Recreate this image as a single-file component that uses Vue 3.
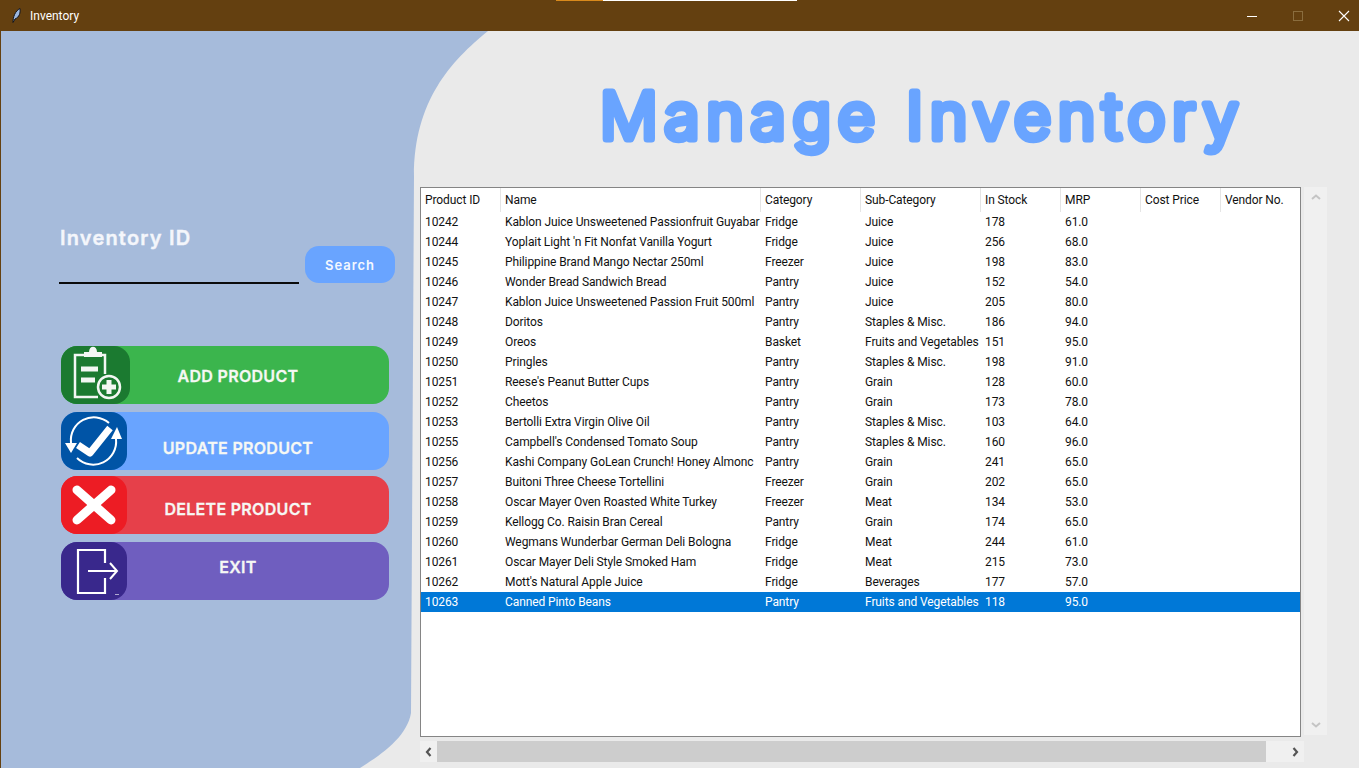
<template>
  <div class="window">
    <header class="titlebar">
      <div class="title-left">
        <svg class="feather" width="9" height="15" viewBox="0 0 9 15">
          <path d="M1 14.500C1 9 3 3 8 0.500C8.500 5 7.500 9 3 11Z" fill="#9db8e0" stroke="#10131c" stroke-width="1" />
        </svg>
        <span>Inventory</span>
      </div>
      <div class="strip"><i class="strip-orange"></i><i class="strip-white"></i></div>
      <div class="win-buttons">
        <svg width="12" height="12" viewBox="0 0 12 12"><path d="M1 6.500H11" stroke="#fff" stroke-width="1" /></svg>
        <svg width="12" height="12" viewBox="0 0 12 12"><rect x="1.500" y="1.500" width="9" height="9" fill="none" stroke="#8a6d3e" /></svg>
        <svg width="12" height="12" viewBox="0 0 12 12"><path d="M1 1L11 11M11 1L1 11" stroke="#fff" stroke-width="1.100" /></svg>
      </div>
    </header>

    <main class="content">
      <svg class="shape" width="500" height="737" viewBox="0 0 500 737">
        <path d="M0 0H487C450 30 413 70 413 145L410 682C406 705 383 722 359 737H0Z" fill="#a6bbdb" />
      </svg>

      <aside class="side">
        <div class="search">
          <div class="search-field">
            <label>Inventory ID</label>
            <div class="search-line"></div>
          </div>
          <button class="search-btn">Search</button>
        </div>

        <div class="actions">
          <div v-for="a in actions" :key="a.label" class="action" :class="a.cls">
            <span class="action-icon">
              <svg v-if="a.cls === 'add'" width="69" height="58" viewBox="0 0 69 58" fill="none" stroke="#f3f7f3">
                <path d="M26 9H14V51H37" stroke-width="2.500" />
                <path d="M38 9H44V28" stroke-width="2.500" />
                <path d="M23 11V6H28C28 -1 36 -1 36 6H41V11Z" fill="#f3f7f3" stroke="none" />
                <path d="M20 23H37M20 34H34" stroke-width="5" />
                <circle cx="48" cy="41" r="11" fill="#1b7a30" stroke-width="2.500" />
                <path d="M48 34V48M41 41H55" stroke-width="5" />
              </svg>
              <svg v-else-if="a.cls === 'update'" width="66" height="58" viewBox="0 0 66 58" fill="none" stroke="#fff">
                <path d="M10 31A23 23 0 0 1 48 11" stroke-width="2" />
                <path d="M55 27A23 23 0 0 1 16 46" stroke-width="2" />
                <path d="M4 31H16L10 41Z" fill="#fff" stroke="none" />
                <path d="M50 27H61L56 15Z" fill="#fff" stroke="none" />
                <path d="M17 33L29 41L49 16" stroke-width="7" stroke-linejoin="round" />
              </svg>
              <svg v-else-if="a.cls === 'delete'" width="66" height="58" viewBox="0 0 66 58" fill="none" stroke="#fff">
                <path d="M16 14L50 44M50 14L16 44" stroke-width="9" stroke-linecap="round" />
              </svg>
              <svg v-else width="66" height="58" viewBox="0 0 66 58" fill="none" stroke="#fff">
                <path d="M44 21V8H17V51H44V36" stroke-width="2.200" />
                <path d="M27 29H55M49 21L56 29L49 37" stroke-width="2" />
                <path d="M54 52.500H58" stroke-width="1" stroke-opacity="0.6" />
              </svg>
            </span>
            <span class="action-label" :class="a.cls + '-label'">{{ a.label }}</span>
          </div>
        </div>
      </aside>

      <section class="main">
        <svg class="heading" width="939" height="156" viewBox="0 0 939 156">
          <text x="181" y="108">Manage Inventory</text>
        </svg>

        <div class="tree-wrap">
          <div class="tree-top">
            <div class="tree">
              <div class="tree-head">
                <div v-for="c in columns" :key="c" class="cell head-cell">{{ c }}</div>
              </div>
              <div
                v-for="r in rows"
                :key="r[0]"
                class="tree-row"
                :class="{ selected: r[0] === '10263' }"
              >
                <div v-for="(v, i) in r" :key="i" class="cell">{{ v }}</div>
              </div>
            </div>
            <div class="vscroll">
              <svg width="10" height="6" viewBox="0 0 10 6"><path d="M1 5L5 1.500L9 5" fill="none" stroke="#c4c4c4" stroke-width="2" /></svg>
              <svg width="10" height="6" viewBox="0 0 10 6"><path d="M1 1L5 4.500L9 1" fill="none" stroke="#c4c4c4" stroke-width="2" /></svg>
            </div>
          </div>
          <div class="hscroll">
            <span class="arrow">
              <svg width="7" height="10" viewBox="0 0 7 10"><path d="M5.500 1L2 5L5.500 9" fill="none" stroke="#555" stroke-width="2.200" /></svg>
            </span>
            <div class="thumb"></div>
            <span class="arrow end">
              <svg width="7" height="10" viewBox="0 0 7 10"><path d="M1.500 1L5 5L1.500 9" fill="none" stroke="#555" stroke-width="2.200" /></svg>
            </span>
          </div>
        </div>
      </section>
    </main>
  </div>
</template>

<script setup>
const actions = [
  { label: 'ADD PRODUCT', cls: 'add' },
  { label: 'UPDATE PRODUCT', cls: 'update' },
  { label: 'DELETE PRODUCT', cls: 'delete' },
  { label: 'EXIT', cls: 'exit' }
]

const columns = ['Product ID', 'Name', 'Category', 'Sub-Category', 'In Stock', 'MRP', 'Cost Price', 'Vendor No.']

const rows = [
  ['10242', 'Kablon Juice Unsweetened Passionfruit Guyabar', 'Fridge', 'Juice', '178', '61.0'],
  ['10244', "Yoplait Light 'n Fit Nonfat Vanilla Yogurt", 'Fridge', 'Juice', '256', '68.0'],
  ['10245', 'Philippine Brand Mango Nectar 250ml', 'Freezer', 'Juice', '198', '83.0'],
  ['10246', 'Wonder Bread Sandwich Bread', 'Pantry', 'Juice', '152', '54.0'],
  ['10247', 'Kablon Juice Unsweetened Passion Fruit 500ml', 'Pantry', 'Juice', '205', '80.0'],
  ['10248', 'Doritos', 'Pantry', 'Staples & Misc.', '186', '94.0'],
  ['10249', 'Oreos', 'Basket', 'Fruits and Vegetables', '151', '95.0'],
  ['10250', 'Pringles', 'Pantry', 'Staples & Misc.', '198', '91.0'],
  ['10251', "Reese's Peanut Butter Cups", 'Pantry', 'Grain', '128', '60.0'],
  ['10252', 'Cheetos', 'Pantry', 'Grain', '173', '78.0'],
  ['10253', 'Bertolli Extra Virgin Olive Oil', 'Pantry', 'Staples & Misc.', '103', '64.0'],
  ['10255', "Campbell's Condensed Tomato Soup", 'Pantry', 'Staples & Misc.', '160', '96.0'],
  ['10256', 'Kashi Company GoLean Crunch! Honey Almonc', 'Pantry', 'Grain', '241', '65.0'],
  ['10257', 'Buitoni Three Cheese Tortellini', 'Freezer', 'Grain', '202', '65.0'],
  ['10258', 'Oscar Mayer Oven Roasted White Turkey', 'Freezer', 'Meat', '134', '53.0'],
  ['10259', 'Kellogg Co. Raisin Bran Cereal', 'Pantry', 'Grain', '174', '65.0'],
  ['10260', 'Wegmans Wunderbar German Deli Bologna', 'Fridge', 'Meat', '244', '61.0'],
  ['10261', 'Oscar Mayer Deli Style Smoked Ham', 'Fridge', 'Meat', '215', '73.0'],
  ['10262', "Mott's Natural Apple Juice", 'Fridge', 'Beverages', '177', '57.0'],
  ['10263', 'Canned Pinto Beans', 'Pantry', 'Fruits and Vegetables', '118', '95.0']
].map(r => [...r, '', ''])
</script>

<style scoped>
.window {
  width: 1359px;
  height: 768px;
  overflow: hidden;
  display: flex;
  flex-direction: column;
  background: #eaeaea;
  font-family: Roboto, "Liberation Sans", sans-serif;
}

.titlebar {
  height: 31px;
  flex: none;
  position: relative;
  display: flex;
  align-items: center;
  justify-content: space-between;
  background: #644010;
  color: #fff;
  font-size: 12px;
}

.title-left {
  display: flex;
  align-items: center;
  gap: 9px;
  padding-left: 12px;
}

.strip {
  position: absolute;
  left: 556px;
  top: 0;
  display: flex;
  height: 1px;
}

.strip-orange {
  width: 47px;
  background: #d98a1c;
}

.strip-white {
  width: 194px;
  background: #fff;
}

.win-buttons {
  display: flex;
  gap: 34px;
  padding-right: 9px;
}

.content {
  flex: 1;
  position: relative;
  display: flex;
  border-left: 1px solid #644010;
}

.shape {
  position: absolute;
  left: 0;
  top: 0;
}

.side {
  position: relative;
  width: 419px;
  flex: none;
  padding: 196px 0 0 59px;
  box-sizing: border-box;
}

.search {
  display: flex;
  align-items: flex-end;
  gap: 6px;
}

.search-field {
  width: 240px;
  margin-left: -1px;
}

.search-field label {
  display: block;
  color: #f4f6fb;
  font: 600 20px/23px "Inter", sans-serif;
  letter-spacing: 1.2px;
  padding-left: 1px;
  -webkit-text-stroke: 0.4px #f4f6fb;
}

.search-line {
  height: 2px;
  margin-top: 32px;
  background: #0b0b0b;
}

.search-btn {
  width: 90px;
  height: 37px;
  margin-bottom: 1px;
  padding: 0;
  border: none;
  border-radius: 14px;
  background: #69a4ff;
  color: #f4f8ff;
  font: 600 13px "Inter", sans-serif;
  letter-spacing: 1px;
}

.actions {
  display: flex;
  flex-direction: column;
  margin: 62px 0 0 1px;
  width: 328px;
}

.action {
  height: 58px;
  border-radius: 16px;
  display: flex;
  color: #f6f8f4;
  font: 600 16px "Inter", sans-serif;
  letter-spacing: 0.3px;
  -webkit-text-stroke: 0.3px #f6f8f4;
}

.action + .action {
  margin-top: 6px;
}

.action.update {
  margin-top: 8px;
}

.action.exit {
  margin-top: 8px;
}

.action-icon {
  width: 66px;
  flex: none;
  border-radius: 16px;
  display: flex;
  align-items: center;
  justify-content: center;
}

.action-label {
  flex: 1;
  display: flex;
  align-items: center;
  justify-content: center;
  margin-left: 33px;
  margin-right: 73px;
  white-space: nowrap;
}

.update-label {
  padding-top: 14px;
}

.delete-label {
  padding-top: 8px;
}

.exit-label {
  padding-bottom: 9px;
}

.add {
  background: #3bb54d;
}

.add .action-icon {
  width: 69px;
  background: #1b7a30;
}

.add .action-label {
  margin-left: 30px;
  padding-top: 1px;
}

.update {
  background: #69a4ff;
}

.update .action-icon {
  background: #0054a6;
}

.delete {
  background: #e6404a;
}

.delete .action-icon {
  background: #ed1c24;
}

.exit {
  background: #6f5ebf;
}

.exit .action-icon {
  background: #39288c;
}

.main {
  position: relative;
  flex: 1;
  min-width: 0;
}

.heading {
  display: block;
  margin-left: -1px;
}

.heading text {
  fill: #69a4ff;
  stroke: #69a4ff;
  stroke-width: 7px;
  stroke-linejoin: round;
  stroke-linecap: round;
  font: 300 64px "Inter", sans-serif;
  letter-spacing: 6.7px;
}

.tree-wrap {
  width: 907px;
}

.tree-top {
  display: flex;
  gap: 3px;
}

.tree {
  width: 881px;
  height: 550px;
  box-sizing: border-box;
  border: 1px solid #858585;
  background: #fff;
  font-size: 12px;
  letter-spacing: -0.1px;
  color: #111;
  overflow: hidden;
}

.tree-head {
  display: grid;
  grid-template-columns: 80px 260px 100px 120px 80px 80px 80px 80px;
  height: 24px;
}

.head-cell {
  height: 24px;
  box-sizing: border-box;
  border-right: 1px solid #e5e5e5;
}

.head-cell:last-child {
  border-right: none;
}

.tree-row {
  display: grid;
  grid-template-columns: 80px 260px 100px 120px 80px 80px 80px 80px;
  height: 20px;
}

.cell {
  padding-left: 4px;
  line-height: 20px;
  white-space: nowrap;
  overflow: hidden;
}

.head-cell.cell {
  line-height: 24px;
}

.tree-row.selected {
  background: #0078d7;
  color: #fff;
}

.vscroll {
  width: 23px;
  height: 548px;
  background: #f0f0f0;
  display: flex;
  flex-direction: column;
  align-items: center;
  justify-content: space-between;
  padding: 7px 0;
  box-sizing: border-box;
}

.hscroll {
  display: flex;
  width: 884px;
  height: 21px;
  margin-top: 4px;
  background: #f0f0f0;
}

.arrow {
  width: 17px;
  flex: none;
  display: flex;
  align-items: center;
  justify-content: center;
}

.arrow.end {
  width: 38px;
  justify-content: flex-end;
  padding-right: 5px;
  box-sizing: border-box;
}

.thumb {
  flex: 1;
  background: #cdcdcd;
}
</style>
